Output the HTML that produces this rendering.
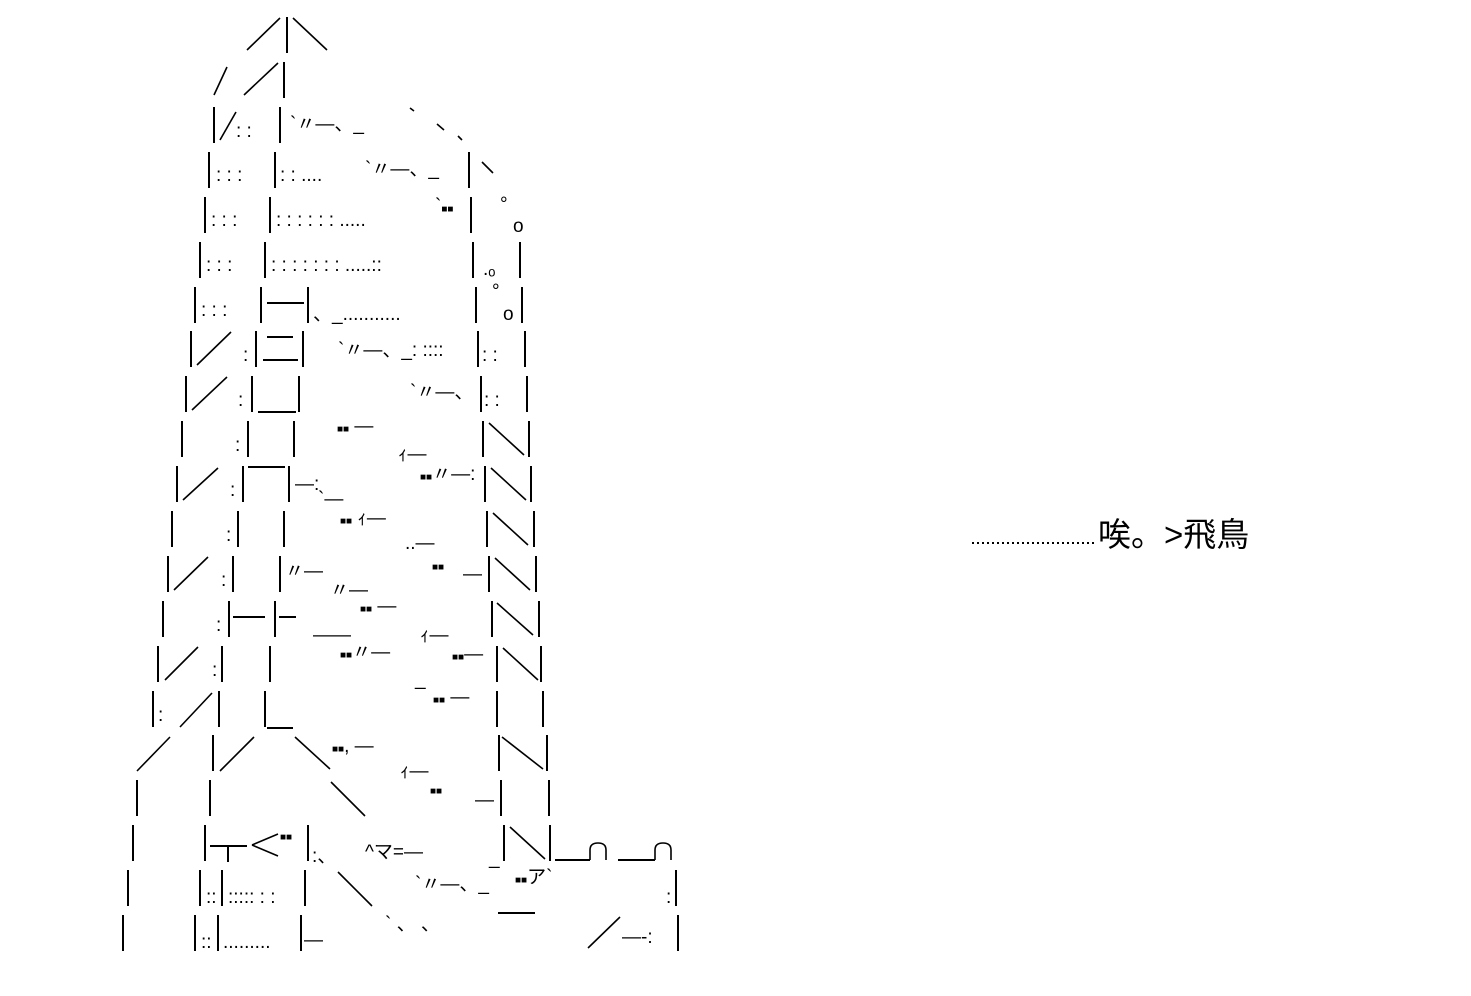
<!DOCTYPE html>
<html><head><meta charset="utf-8">
<style>
html,body{margin:0;padding:0;background:#fff;}
body{width:1471px;height:996px;overflow:hidden;position:relative;}
svg{position:absolute;left:0;top:0;}
.t{font-family:"Liberation Sans","Noto Sans CJK JP",sans-serif;font-size:19px;fill:#000;}
.q{font-size:10px;}
.cap{position:absolute;left:1098px;top:508px;font-family:"Liberation Sans","Noto Sans CJK JP",sans-serif;font-size:33px;color:#000;white-space:nowrap;letter-spacing:0px;}
</style></head><body>
<svg width="1471" height="996" viewBox="0 0 1471 996">
<g stroke="#000" stroke-width="2" fill="none" shape-rendering="crispEdges">
<path d="
M287 17v36
M284 62v36
M214 107v36 M280 107v36
M209 152v36 M275 152v36 M469 152v36
M205 197v36 M270 197v36 M471 197v36
M200 242v36 M265 242v36 M473 242v36 M520 242v36
M195 287v36 M261 287v36 M308 287v36 M476 287v36 M522 287v36
M191 331v36 M256 331v36 M303 331v36 M478 331v36 M525 331v36
M186 376v36 M252 376v36 M299 376v36 M481 376v36 M527 376v36
M182 421v36 M248 421v36 M294 421v36 M483 421v36 M529 421v36
M177 466v36 M243 466v36 M289 466v36 M485 466v36 M531 466v36
M172 511v36 M238 511v36 M284 511v36 M487 511v36 M534 511v36
M168 556v36 M233 556v36 M280 556v36 M489 556v36 M536 556v36
M163 601v36 M229 601v36 M275 601v36 M492 601v36 M539 601v36
M158 646v36 M222 646v36 M270 646v36 M497 646v36 M541 646v36
M153 691v36 M219 691v36 M265 691v36 M497 691v36 M543 691v36
M213 735v36 M499 735v36 M547 735v36
M137 780v36 M210 780v36 M501 780v36 M549 780v36
M133 825v36 M205 825v36 M308 825v36 M504 825v36 M550 825v36
M128 870v36 M200 870v36 M222 870v36 M305 870v36 M676 870v36
M123 915v36 M195 915v36 M218 915v36 M301 915v36 M678 915v36
"/>
<path d="
M267 303h37
M267 337h26 M263 360h35
M258 412h38
M248 467h37
M233 617h32 M279 617h17
M267 728h26
M210 846h37 M228 846v16
M555 860h35 M618 860h37
M498 913h37
"/>
</g>
<g stroke="#000" stroke-width="1.6" fill="none">
<path d="M247 50L280 18 M293 18L327 50"/>
<path d="M214 95L227 67 M244 95L278 63"/>
<path d="M220 140L236 112"/>
<path d="M197 365L231 332 M192 410L227 377 M183 500L218 468 M174 590L208 557 M165 680L198 647 M180 727L212 693"/>
<path d="M137 771L170 737 M220 771L254 737 M295 737L330 769 M331 782L365 816 M338 872L372 906"/>
<path d="M489 423L524 455 M491 468L526 500 M493 513L528 545 M495 558L530 590 M497 603L533 635 M503 648L538 680 M502 737L543 769 M510 827L545 859"/>
<path d="M482 162L493 173 M410 108L414 111 M437 124L444 130 M458 136L462 140"/>
<path d="M252 845L278 834 M252 845L278 856"/>
<path d="M588 948L620 917"/>
<path d="M590 860v-10 q0 -7 8 -7 q8 0 8 7 v10 M655 860v-10 q0 -7 8 -7 q8 0 8 7 v10"/>
</g>
<g class="t">
<text x="236" y="137">: :</text>
<text x="216" y="181">: : :</text><text x="280" y="181">: : ....</text><text x="290" y="130">`〃—、_</text>
<text x="365" y="175">`〃—、_</text>
<text x="211" y="226">: : :</text><text x="276" y="226">: : : : : : .....</text><text x="435" y="212">`<tspan class="q">■■</tspan></text>
<text x="206" y="271">: : :</text><text x="271" y="271">: : : : : : : .....::</text><text x="483" y="275">.ₒ</text>
<text x="201" y="316">: : :</text><text x="313" y="320">、_...........</text>
<text x="338" y="356">`〃—、_: ::::</text><text x="482" y="361">: :</text>
<text x="243" y="361">:</text><text x="238" y="406">:</text><text x="235" y="451">:</text>
<text x="410" y="398">`〃—、</text><text x="484" y="406">: :</text>
<text x="337" y="432"><tspan class="q">■■</tspan>  —</text><text x="398" y="460">ｨ—</text>
<text x="230" y="496">:</text><text x="295" y="490">—:</text><text x="318" y="505">`—</text><text x="420" y="480"><tspan class="q">■■</tspan>〃—:</text>
<text x="226" y="541">:</text><text x="340" y="524"><tspan class="q">■■</tspan>  ｨ—</text><text x="405" y="549">..—</text>
<text x="221" y="586">:</text><text x="285" y="577">〃—</text><text x="330" y="596">〃—</text><text x="432" y="570"><tspan class="q">■■</tspan></text><text x="463" y="580">—</text>
<text x="216" y="631">:</text><text x="360" y="612"><tspan class="q">■■</tspan>  —</text><text x="313" y="641">——</text><text x="420" y="641">ｨ—</text>
<text x="212" y="676">:</text><text x="340" y="658"><tspan class="q">■■</tspan>〃—</text><text x="415" y="685">_</text><text x="452" y="660"><tspan class="q">■■</tspan>—</text>
<text x="158" y="721">:</text><text x="433" y="703"><tspan class="q">■■</tspan>  —</text>
<text x="332" y="752"><tspan class="q">■■</tspan>,  —</text><text x="400" y="777">ｨ—</text>
<text x="430" y="794"><tspan class="q">■■</tspan></text><text x="475" y="806">—</text>
<text x="312" y="862">:、</text><text x="365" y="858">^マ=—</text><text x="489" y="864">_</text><text x="280" y="840"><tspan class="q">■■</tspan></text>
<text x="206" y="903">::</text><text x="228" y="903">:::::  : :</text><text x="415" y="890">`〃—、_</text><text x="515" y="883"><tspan class="q">■■</tspan>ア`</text><text x="666" y="903">:</text>
<text x="201" y="948">::</text><text x="223" y="948">.........</text><text x="304" y="946">—</text><text x="385" y="930">`  、  、</text><text x="622" y="943">—‐:</text>
<text x="500" y="210">°</text><text x="513" y="232">o</text><text x="492" y="297">°</text><text x="503" y="320">o</text>
</g>
<g fill="#000">
<rect x="972" y="542" width="2" height="2"/><rect x="977" y="542" width="2" height="2"/><rect x="982" y="542" width="2" height="2"/><rect x="987" y="542" width="2" height="2"/><rect x="992" y="542" width="2" height="2"/><rect x="997" y="542" width="2" height="2"/><rect x="1002" y="542" width="2" height="2"/><rect x="1007" y="542" width="2" height="2"/><rect x="1012" y="542" width="2" height="2"/><rect x="1017" y="542" width="2" height="2"/><rect x="1022" y="542" width="2" height="2"/><rect x="1027" y="542" width="2" height="2"/><rect x="1032" y="542" width="2" height="2"/><rect x="1037" y="542" width="2" height="2"/><rect x="1042" y="542" width="2" height="2"/><rect x="1047" y="542" width="2" height="2"/><rect x="1052" y="542" width="2" height="2"/><rect x="1057" y="542" width="2" height="2"/><rect x="1062" y="542" width="2" height="2"/><rect x="1067" y="542" width="2" height="2"/><rect x="1072" y="542" width="2" height="2"/><rect x="1077" y="542" width="2" height="2"/><rect x="1082" y="542" width="2" height="2"/><rect x="1087" y="542" width="2" height="2"/><rect x="1092" y="542" width="2" height="2"/>
</g>
</svg>
<div class="cap">唉。&gt;飛鳥</div>
</body></html>
